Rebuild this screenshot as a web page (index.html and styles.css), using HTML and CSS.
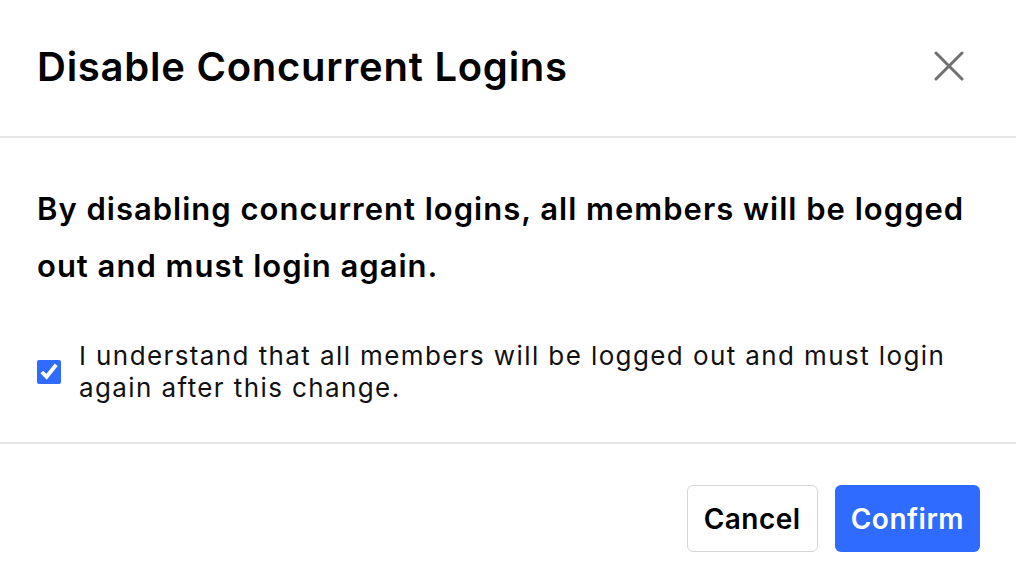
FILE: index.html
```html
<!DOCTYPE html>
<html lang="en">
<head>
  <meta charset="UTF-8">
  <meta name="viewport" content="width=device-width, initial-scale=1.0">
  <title>Disable Concurrent Logins</title>
  <link rel="stylesheet" href="styles.css">
</head>
<body>
  <div class="modal">
    <header class="modal-head">
      <h1 class="modal-title">Disable Concurrent Logins</h1>
      <button class="close-btn" aria-label="Close">
        <svg width="30" height="30" viewBox="0 0 30 30">
          <path d="M2 2 L28 28 M28 2 L2 28" stroke="#707070" stroke-width="3" stroke-linecap="round" fill="none"/>
        </svg>
      </button>
    </header>

    <section class="modal-body">
      <p class="warning">By disabling concurrent logins, all members will be logged out and must login again.</p>
      <label class="confirm-row">
        <input type="checkbox" class="check" checked>
        <span class="confirm-text">I understand that all members will be logged out and must login again after this change.</span>
      </label>
    </section>

    <footer class="modal-foot">
      <button class="btn btn-cancel">Cancel</button>
      <button class="btn btn-confirm">Confirm</button>
    </footer>
  </div>
</body>
</html>
```

FILE: styles.css
```css
* {
  padding: 0;
  margin: 0;
  box-sizing: border-box;
}
body {
  font-family: Inter, "Open Sans", sans-serif;
  color: #000;
  background-color: #fff;
}
.modal {
  width: 1016px;
  height: 584px;
  display: flex;
  flex-direction: column;
}
.modal-head {
  height: 138px;
  display: flex;
  align-items: center;
  justify-content: space-between;
  padding: 0 52px 4px 37px;
  border-bottom: 2px solid #e6e6e6;
}
.modal-title {
  font-size: 40px;
  font-weight: 600;
  letter-spacing: 0.75px;
}
.close-btn {
  border: none;
  background: none;
  width: 30px;
  height: 30px;
  cursor: pointer;
}
.modal-body {
  height: 306px;
  padding: 42px 20px 0 37px;
  border-bottom: 2px solid #e6e6e6;
}
.warning {
  max-width: 945px;
  font-size: 31px;
  font-weight: 600;
  line-height: 57px;
  letter-spacing: 1px;
}
.confirm-row {
  display: flex;
  align-items: center;
  gap: 18px;
  margin-top: 46px;
  font-size: 26px;
  line-height: 32px;
  letter-spacing: 1.4px;
  color: #111;
}
.confirm-text {
  max-width: 910px;
}
.check {
  width: 24px;
  height: 24px;
  flex-shrink: 0;
  accent-color: #2f6bff;
}
.modal-foot {
  flex: 1;
  display: flex;
  justify-content: flex-end;
  align-items: flex-start;
  gap: 17px;
  padding: 41px 36px 0 0;
}
.btn {
  height: 67px;
  padding: 0 16px;
  border-radius: 6px;
  font-family: inherit;
  font-size: 28px;
  font-weight: 600;
  letter-spacing: 0.5px;
  cursor: pointer;
}
.btn-cancel {
  background: #fff;
  border: 1.5px solid #d6d6d6;
  color: #000;
}
.btn-confirm {
  background: #2f6bff;
  border: none;
  color: #fff;
}
```
